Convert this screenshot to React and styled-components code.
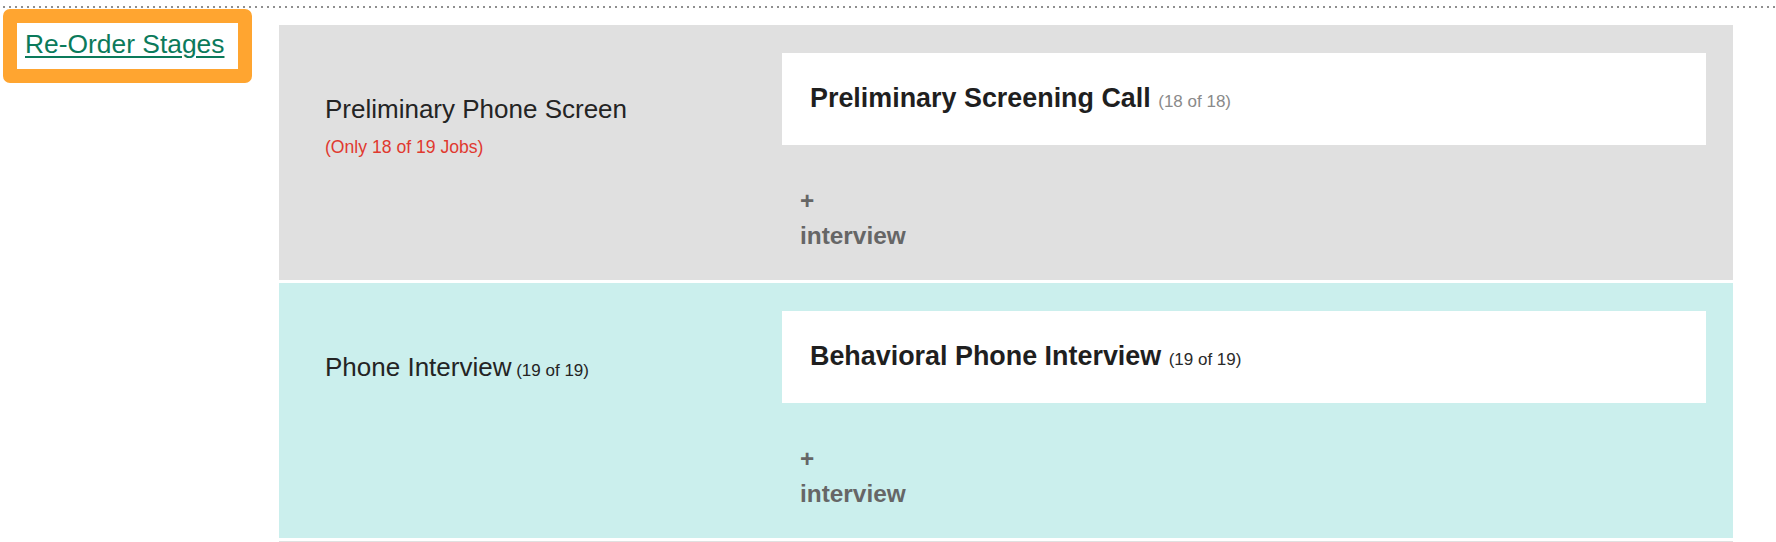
import React from "react";
import styled, { createGlobalStyle } from "styled-components";

const GlobalStyle = createGlobalStyle`
  html, body {
    margin: 0;
    padding: 0;
    background: #ffffff;
  }
  body {
    font-family: "Liberation Sans", Arial, sans-serif;
    color: #222222;
  }
`;

const Page = styled.div`
  width: 1776px;
  padding: 6px 0 0 3px;
  box-sizing: border-box;
`;

const Divider = styled.div`
  height: 2px;
  background: repeating-linear-gradient(
    to right,
    #8f8f8f 0,
    #8f8f8f 2px,
    transparent 2px,
    transparent 6px
  );
`;

const Main = styled.div`
  display: flex;
  margin-top: 1px;
`;

const Sidebar = styled.div`
  width: 276px;
  flex: none;
`;

const ReorderLink = styled.a`
  display: inline-block;
  box-sizing: border-box;
  width: 249px;
  height: 74px;
  border: 14px solid #ffa530;
  border-radius: 7px;
  background: #ffffff;
  padding: 3px 0 0 8px;
  font-size: 26.4px;
  line-height: 36px;
  color: #0b7a5b;
  text-decoration: underline;
  text-decoration-thickness: 1.5px;
  text-underline-offset: 3px;
  cursor: pointer;
`;

const StageList = styled.div`
  width: 1454px;
  padding-top: 16px;
  display: flex;
  flex-direction: column;
  gap: 3px;
`;

const StageRow = styled.div`
  display: flex;
  height: 255px;
  background: ${(p) => p.$bg};
`;

const NextRowEdge = styled.div`
  height: 12px;
  background: #e0e0e0;
`;

const StageLabel = styled.div`
  width: 503px;
  flex: none;
  box-sizing: border-box;
  padding: 66px 0 0 46px;
`;

const StageName = styled.div`
  font-size: 26px;
  line-height: 36px;
  color: #242424;
`;

const StageCount = styled.span`
  font-size: 17px;
  color: #242424;
`;

const Warning = styled.div`
  margin-top: 8px;
  font-size: 17.6px;
  line-height: 24px;
  color: #e0392f;
`;

const Interviews = styled.div`
  flex: 1;
  padding: 28px 27px 0 0;
`;

const InterviewCard = styled.div`
  box-sizing: border-box;
  height: 92px;
  background: #ffffff;
  padding: 27px 28px 0;
  font-size: 26.9px;
  line-height: 36px;
`;

const InterviewTitle = styled.span`
  font-weight: 700;
  color: #1f1f1f;
`;

const InterviewCount = styled.span`
  font-size: 17px;
  color: ${(p) => (p.$muted ? "#8a8a8a" : "#2a2a2a")};
`;

const AddInterview = styled.a`
  display: block;
  width: min-content;
  margin: 38px 0 0 18px;
  font-size: 24.4px;
  line-height: 35px;
  font-weight: 700;
  color: #666666;
  cursor: pointer;
`;

const stages = [
  {
    name: "Preliminary Phone Screen",
    count: null,
    warning: "(Only 18 of 19 Jobs)",
    bg: "#e0e0e0",
    interview: "Preliminary Screening Call",
    interviewCount: "(18 of 18)",
    muted: true,
  },
  {
    name: "Phone Interview",
    count: "(19 of 19)",
    warning: null,
    bg: "#cbefed",
    interview: "Behavioral Phone Interview",
    interviewCount: "(19 of 19)",
    muted: false,
  },
];

export default function App() {
  return (
    <>
      <GlobalStyle />
      <Page>
        <Divider />
        <Main>
          <Sidebar>
            <ReorderLink>Re-Order Stages</ReorderLink>
          </Sidebar>
          <StageList>
            {stages.map((s) => (
              <StageRow key={s.name} $bg={s.bg}>
                <StageLabel>
                  <StageName>
                    {s.name}
                    {s.count && <StageCount> {s.count}</StageCount>}
                  </StageName>
                  {s.warning && <Warning>{s.warning}</Warning>}
                </StageLabel>
                <Interviews>
                  <InterviewCard>
                    <InterviewTitle>{s.interview}</InterviewTitle>{" "}
                    <InterviewCount $muted={s.muted}>
                      {s.interviewCount}
                    </InterviewCount>
                  </InterviewCard>
                  <AddInterview>+ interview</AddInterview>
                </Interviews>
              </StageRow>
            ))}
            <NextRowEdge />
          </StageList>
        </Main>
      </Page>
    </>
  );
}
